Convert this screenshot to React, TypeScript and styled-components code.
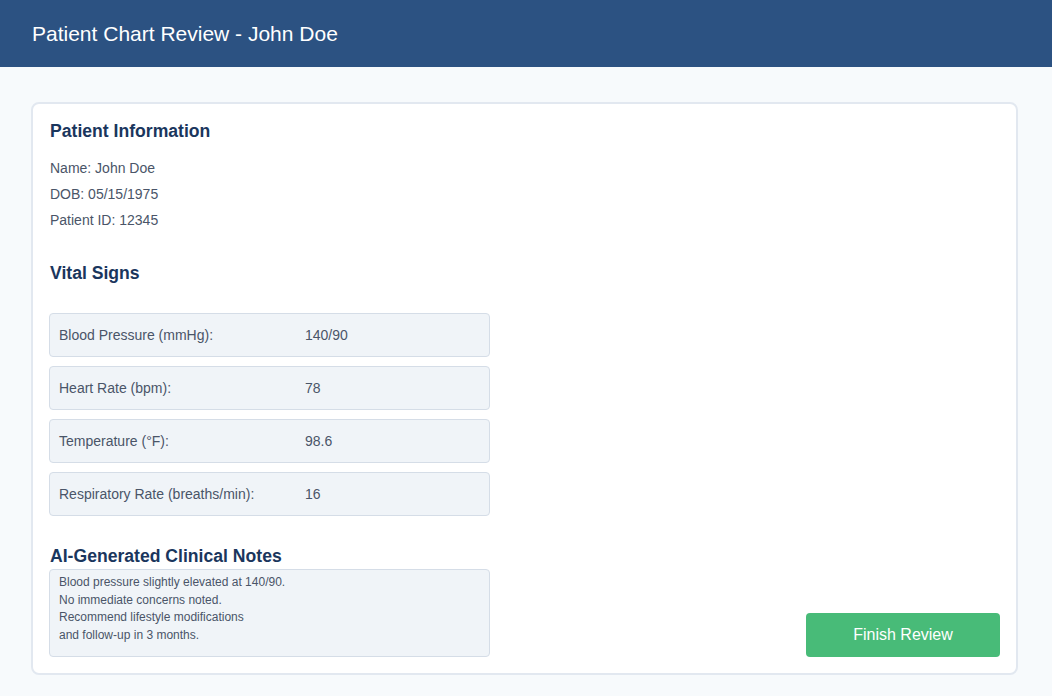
import styled, { createGlobalStyle } from "styled-components";

const GlobalStyle = createGlobalStyle`
  html, body {
    margin: 0;
    padding: 0;
    background: #f7fafc;
    font-family: "Liberation Sans", Arial, sans-serif;
  }
  * {
    box-sizing: border-box;
  }
`;

const Header = styled.header`
  height: 67px;
  background: #2c5282;
  display: flex;
  align-items: center;
  padding: 0 32px;
`;

const Title = styled.h1`
  margin: 0;
  color: #ffffff;
  font-size: 21px;
  font-weight: 400;
`;

const Main = styled.main`
  padding: 35px 34px 21px 31px;
`;

const Card = styled.section`
  background: #ffffff;
  border: 2px solid #e2e8f0;
  border-radius: 8px;
  padding: 16px;
  display: flex;
  justify-content: space-between;
  align-items: flex-end;
`;

const Column = styled.div`
  width: 441px;
`;

const SectionTitle = styled.h2<{ $gap: number; $top?: number }>`
  margin: ${(p) => p.$top ?? 0}px 0 ${(p) => p.$gap}px 1px;
  font-size: 17.6px;
  line-height: 22px;
  font-weight: 700;
  color: #1a365d;
`;

const InfoLine = styled.p`
  margin: 0 0 0 1px;
  font-size: 14px;
  line-height: 26px;
  color: #4a5568;
`;

const VitalsList = styled.div`
  display: flex;
  flex-direction: column;
  gap: 9px;
`;

const VitalRow = styled.div`
  height: 44px;
  display: grid;
  grid-template-columns: 246px 1fr;
  align-items: center;
  padding: 0 9px;
  background: #f0f4f8;
  border: 1px solid #d5dde7;
  border-radius: 4px;
  font-size: 14px;
  color: #4a5568;
`;

const Notes = styled.div`
  height: 88px;
  padding: 4px 9px;
  background: #f0f4f8;
  border: 1px solid #d5dde7;
  border-radius: 4px;
  font-size: 12px;
  line-height: 17.7px;
  color: #4a5568;
  white-space: pre-line;
`;

const FinishButton = styled.button`
  width: 194px;
  height: 44px;
  border: none;
  border-radius: 4px;
  background: #48bb78;
  color: #ffffff;
  font-family: "Liberation Sans", Arial, sans-serif;
  font-size: 16px;
  cursor: pointer;
`;

const vitals = [
  { label: "Blood Pressure (mmHg):", value: "140/90" },
  { label: "Heart Rate (bpm):", value: "78" },
  { label: "Temperature (°F):", value: "98.6" },
  { label: "Respiratory Rate (breaths/min):", value: "16" },
];

const notes =
  "Blood pressure slightly elevated at 140/90.\nNo immediate concerns noted.\nRecommend lifestyle modifications\nand follow-up in 3 months.";

export default function App() {
  return (
    <>
      <GlobalStyle />
      <Header>
        <Title>Patient Chart Review - John Doe</Title>
      </Header>
      <Main>
        <Card>
          <Column>
            <SectionTitle $gap={13}>Patient Information</SectionTitle>
            <InfoLine>Name: John Doe</InfoLine>
            <InfoLine>DOB: 05/15/1975</InfoLine>
            <InfoLine>Patient ID: 12345</InfoLine>

            <SectionTitle $top={29} $gap={29}>
              Vital Signs
            </SectionTitle>
            <VitalsList>
              {vitals.map((v) => (
                <VitalRow key={v.label}>
                  <span>{v.label}</span>
                  <span>{v.value}</span>
                </VitalRow>
              ))}
            </VitalsList>

            <SectionTitle $top={29} $gap={2}>
              AI-Generated Clinical Notes
            </SectionTitle>
            <Notes>{notes}</Notes>
          </Column>
          <FinishButton>Finish Review</FinishButton>
        </Card>
      </Main>
    </>
  );
}
